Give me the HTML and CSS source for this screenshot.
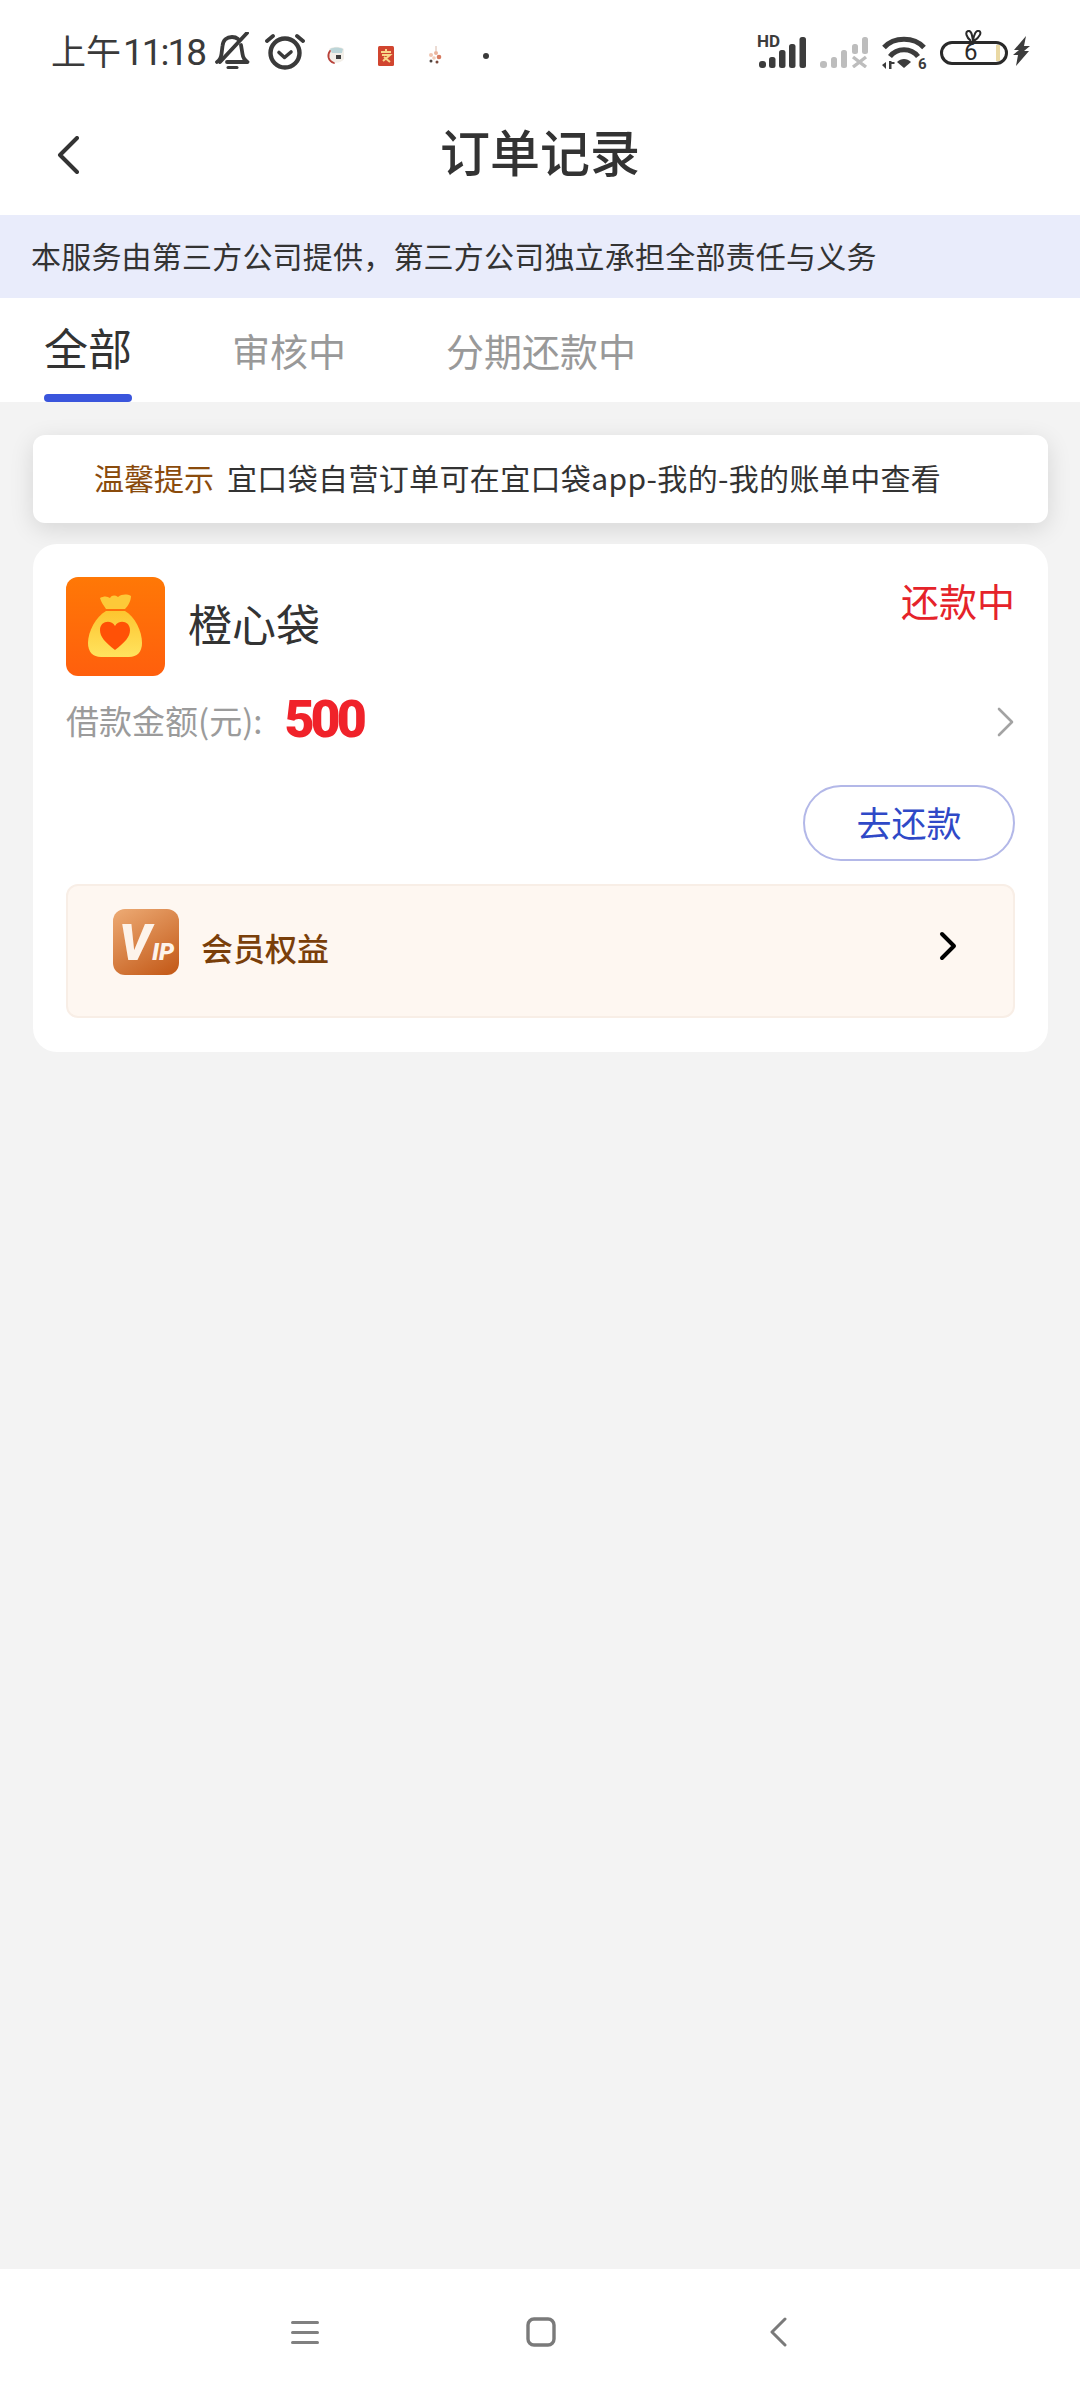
FILE: index.html
```html
<!DOCTYPE html>
<html lang="zh-CN">
<head>
    <meta charset="UTF-8">
    <meta name="viewport" content="width=device-width, initial-scale=1.0">
    <title>订单记录</title>
    <link rel="stylesheet" href="styles.css">
</head>
<body>
    <div class="status-bar">
        <div class="status-left">
            <span class="status-time"><span class="status-ampm">上午</span>11:18</span>
            <svg class="icon-bell" width="35" height="38" viewBox="0 0 35 38" fill="none" stroke="#3a3a3a" stroke-width="3.800" stroke-linecap="round" stroke-linejoin="round">
                <path d="M2 30c3-2 4-4 4.500-8l1-8C8 8 12 5 17 5c2.500 0 4.500 .7 6 2"/>
                <path d="M26 13l1.500 9c.5 4 2 6 5 8H12"/>
                <path d="M32 1L5 30"/>
                <path d="M13 35.500h9" stroke-width="3"/>
            </svg>
            <svg class="icon-alarm" width="40" height="39" viewBox="0 0 40 39" fill="none" stroke="#3a3a3a" stroke-linecap="round" stroke-linejoin="round">
                <circle cx="20" cy="21" r="14.500" stroke-width="4.400"/>
                <path d="M14 20.500l5.500 5 6.500-5.500" stroke-width="3.600"/>
                <path d="M2 9l6-5M38 9l-6-5" stroke-width="3.800"/>
            </svg>
            <svg class="icon-app-a" width="20" height="19" viewBox="0 0 20 19">
                <path d="M3 3c4-3 11-3 15 0v10c-2 4-10 5-14 2z" fill="#f3efe9"/>
                <path d="M4 3c4-2 9-2 13 0l-1 4H6z" fill="#bcd5d8"/>
                <path d="M4 5C1 9 2 15 8 17" fill="none" stroke="#b8423a" stroke-width="1.800" stroke-linecap="round"/>
                <rect x="10" y="9" width="5" height="4" fill="#3f3f3f"/>
            </svg>
            <svg class="icon-app-b" width="16" height="20" viewBox="0 0 16 20">
                <rect width="16" height="20" rx="1.500" fill="#d1452f"/>
                <path d="M3 6h10M8 3v3M4 9h8L5 15M6 11l6 5" fill="none" stroke="#f8d689" stroke-width="2"/>
            </svg>
            <svg class="icon-app-c" width="14" height="19" viewBox="0 0 14 19">
                <path d="M8 0v5" stroke="#d8b8a8" stroke-width="1"/>
                <circle cx="8" cy="7" r="2" fill="#eab49c"/>
                <circle cx="3" cy="9" r="2" fill="#efc4b0"/>
                <circle cx="11" cy="11" r="2.300" fill="#d77a5f"/>
                <circle cx="6" cy="12" r="1.800" fill="#f0cdb9"/>
                <circle cx="3" cy="15" r="1.500" fill="#4c4440"/>
                <circle cx="9" cy="16" r="1.500" fill="#7b4a3c"/>
            </svg>
            <span class="status-dot"></span>
        </div>
        <div class="status-right">
            <svg class="icon-signal" width="50" height="38" viewBox="0 -6 50 38" fill="#3c3c3c">
                <text class="icon-hd" x="0" y="11">HD</text>
                <rect x="2" y="25" width="7" height="7" rx="3"/>
                <rect x="12" y="21" width="6.500" height="11" rx="2.500"/>
                <rect x="22" y="14" width="6.500" height="18" rx="2.500"/>
                <rect x="32" y="8" width="6.500" height="24" rx="2.500"/>
                <rect x="42.500" y="1" width="6.500" height="31" rx="2.500"/>
            </svg>
            <svg class="icon-signal-off" width="48" height="32" viewBox="0 0 48 32" fill="#bdbdbd">
                <rect x="0" y="25" width="7" height="7" rx="3"/>
                <rect x="11" y="21" width="6" height="11" rx="2.500"/>
                <rect x="21" y="14" width="6" height="18" rx="2.500"/>
                <rect x="32" y="8" width="6" height="10" rx="2.500"/>
                <rect x="42" y="1" width="6" height="17" rx="2.500"/>
                <path d="M33 21l13 10M46 21L33 31" fill="none" stroke="#bdbdbd" stroke-width="3.400"/>
            </svg>
            <svg class="icon-wifi" width="46" height="42" viewBox="0 0 46 42" fill="none" stroke="#3c3c3c" stroke-width="5">
                <path d="M3 12.500C13 1.500 33 1.500 43 12.500"/>
                <path d="M9 21.500C16 12.500 30 12.500 37 21.500"/>
                <path d="M23 33l-7-6c4-4 10-4 14 0z" fill="#3c3c3c" stroke="none"/>
                <path d="M1 30l4-3v7zM8 26h2.500v8H8zM10.500 27h3v2h-3z" fill="#3c3c3c" stroke="none"/>
                <text class="icon-wifi-six" x="37" y="34">6</text>
            </svg>
            <svg class="icon-battery" width="68" height="37" viewBox="0 0 68 37" fill="none" stroke="#2a2a2a">
                <rect x="1.500" y="12.500" width="65" height="21" rx="10.500" stroke-width="3"/>
                <rect x="56" y="15" width="4" height="16" fill="#ead9a4" stroke="none"/>
                <path d="M31 11c-5-4-6-9-3-10s4 3 5 10c1-7 3-11 6-10s1 6-5 10" stroke-width="2"/>
                <text class="icon-battery-six" x="24" y="30">6</text>
            </svg>
            <svg class="icon-bolt" width="17" height="30" viewBox="0 0 17 30" fill="#3c3c3c">
                <path d="M13 0L1 14h5l-6 5h5L3 30l13-15h-5l6-5h-6z"/>
            </svg>
        </div>
    </div>

    <div class="nav-bar">
        <svg class="nav-back" width="22" height="38" viewBox="0 0 22 38" fill="none" stroke="#333" stroke-width="4" stroke-linecap="round" stroke-linejoin="round">
            <path d="M20 2L3 19l17 17"/>
        </svg>
        <h1 class="nav-title">订单记录</h1>
    </div>

    <div class="notice-banner">本服务由第三方公司提供，第三方公司独立承担全部责任与义务</div>

    <div class="tabs">
        <div class="tab tab-active">全部</div>
        <div class="tab">审核中</div>
        <div class="tab">分期还款中</div>
    </div>

    <div class="content">
        <div class="tip-card">
            <span class="tip-label">温馨提示</span>
            <span class="tip-text">宜口袋自营订单可在宜口袋app-我的-我的账单中查看</span>
        </div>

        <div class="order-card">
            <div class="order-head">
                <svg class="order-logo" width="99" height="99" viewBox="0 0 99 99">
                    <defs>
                        <linearGradient id="logoBg" x1="0" y1="0" x2="0" y2="1">
                            <stop offset="0" stop-color="#ff7806"/>
                            <stop offset="1" stop-color="#ff5f0d"/>
                        </linearGradient>
                        <linearGradient id="bagFill" x1="0" y1="0" x2="0" y2="1">
                            <stop offset="0" stop-color="#fdc52f"/>
                            <stop offset="1" stop-color="#ffe35e"/>
                        </linearGradient>
                    </defs>
                    <rect width="99" height="99" rx="12" fill="url(#logoBg)"/>
                    <path d="M34 21C38 19 41 19 44 21C46 18 49 18 52 20C56 17 61 17 65 19C65 24 62 29 59 32H40C38 29 35 25 34 21z" fill="#fdc938"/>
                    <path d="M40 34h19c10 6 17 20 17 32c0 9-5 14-13 14H35c-8 0-13-5-13-14c0-12 8-26 18-32z" fill="url(#bagFill)"/>
                    <path d="M49 73C39 65 34 60 34 53c0-9 11-11 15-4c4-7 15-5 15 4c0 7-5 12-15 20z" fill="#ff5106"/>
                </svg>
                <div class="order-name">橙心袋</div>
                <div class="order-status">还款中</div>
            </div>
            <div class="order-amount">
                <span class="amount-label">借款金额(元):</span>
                <span class="amount-value">500</span>
                <svg class="amount-arrow" width="18" height="30" viewBox="0 0 18 30" fill="none" stroke="#a3a3a3" stroke-width="2.600" stroke-linecap="round" stroke-linejoin="round">
                    <path d="M2 2l13 13L2 28"/>
                </svg>
            </div>
            <div class="order-actions">
                <div class="repay-btn">去还款</div>
            </div>
            <div class="vip-row">
                <svg class="vip-icon" width="66" height="66" viewBox="0 0 66 66">
                    <defs>
                        <linearGradient id="vipBg" x1="0.200" y1="0" x2="0.800" y2="1">
                            <stop offset="0" stop-color="#eaa56e"/>
                            <stop offset="1" stop-color="#c55d1c"/>
                        </linearGradient>
                    </defs>
                    <rect width="66" height="66" rx="12" fill="url(#vipBg)"/>
                    <text class="vip-v" x="6" y="51">V</text>
                    <text class="vip-ip" x="39" y="51">IP</text>
                </svg>
                <div class="vip-text">会员权益</div>
                <svg class="vip-arrow" width="18" height="30" viewBox="0 0 18 30" fill="none" stroke="#000" stroke-width="4" stroke-linecap="round" stroke-linejoin="round">
                    <path d="M3 3l12 12L3 27"/>
                </svg>
            </div>
        </div>
    </div>

    <div class="bottom-nav">
        <svg width="28" height="24" viewBox="0 0 28 24" fill="#808080">
            <rect y="1" width="28" height="3" rx="1.500"/>
            <rect y="11" width="28" height="3" rx="1.500"/>
            <rect y="21" width="28" height="3" rx="1.500"/>
        </svg>
        <svg class="nav-home" width="30" height="30" viewBox="0 0 30 30" fill="none" stroke="#7a7a7a" stroke-width="3.400">
            <rect x="2" y="2" width="26" height="26" rx="6"/>
        </svg>
        <svg width="18" height="30" viewBox="0 0 18 30" fill="none" stroke="#7a7a7a" stroke-width="3" stroke-linecap="round" stroke-linejoin="round">
            <path d="M16 2L3 15l13 13"/>
        </svg>
    </div>
</body>
</html>
```

FILE: styles.css
```css
* {
    box-sizing: border-box;
}
body {
    margin: 0;
    width: 1080px;
    height: 2400px;
    display: flex;
    flex-direction: column;
    background: #f3f3f3;
    color: #333;
    font-family: "Noto Sans CJK SC", "Noto Sans", sans-serif;
}

/* status bar */
.status-bar {
    height: 72px;
    flex: none;
    padding: 30px 50px 0 51px;
    display: flex;
    justify-content: space-between;
    align-items: flex-start;
    background: #fff;
}
.status-left {
    display: flex;
    align-items: center;
    height: 42px;
}
.status-time {
    font-family: Roboto, "Noto Sans CJK SC", sans-serif;
    font-size: 37px;
    line-height: 42px;
    letter-spacing: -2px;
    color: #3a3a3a;
    width: 164px;
    white-space: nowrap;
}
.status-ampm {
    font-family: "Noto Sans CJK SC", sans-serif;
    font-size: 35px;
    letter-spacing: 0;
    margin-right: 2px;
}
.icon-alarm {
    margin-left: 15px;
}
.icon-app-a {
    margin-left: 21px;
    margin-top: 9px;
}
.icon-app-b {
    margin-left: 32px;
    margin-top: 9px;
}
.icon-app-c {
    margin-left: 34px;
    margin-top: 9px;
}
.status-dot {
    width: 6px;
    height: 6px;
    margin-left: 41px;
    margin-top: 9px;
    border-radius: 50%;
    background: #3a3a3a;
}
.status-right {
    display: flex;
    align-items: flex-start;
}
.icon-signal-off {
    margin-top: 6px;
    margin-left: 13px;
}
.icon-wifi {
    margin-top: 5px;
    margin-left: 13px;
}
.icon-battery {
    margin-left: 13px;
}
.icon-bolt {
    margin-top: 6px;
    margin-left: 5px;
}
.icon-hd {
    font-family: Roboto, sans-serif;
    font-weight: 700;
    font-size: 17px;
}
.icon-wifi-six {
    font-family: Roboto, sans-serif;
    font-weight: 700;
    font-size: 15px;
    fill: #3c3c3c;
    stroke: none;
}
.icon-battery-six {
    font-family: Roboto, sans-serif;
    font-size: 24px;
    fill: #2a2a2a;
    stroke: none;
}

/* title bar */
.nav-bar {
    height: 143px;
    flex: none;
    position: relative;
    display: flex;
    align-items: center;
    justify-content: center;
    background: #fff;
}
.nav-back {
    position: absolute;
    left: 57px;
    top: 64px;
}
.nav-title {
    margin: 0;
    font-size: 50px;
    font-weight: 500;
    line-height: 60px;
    color: #333;
    padding-top: 12px;
}

.notice-banner {
    height: 83px;
    flex: none;
    padding: 0 0 3px 31px;
    display: flex;
    align-items: center;
    background: #e9ecfb;
    font-size: 30px;
    letter-spacing: 0.2px;
    color: #333;
}

/* tabs */
.tabs {
    height: 104px;
    flex: none;
    padding-left: 44px;
    display: flex;
    gap: 100px;
    background: #fff;
}
.tab {
    position: relative;
    font-size: 38px;
    line-height: 104px;
    color: #999;
}
.tab-active {
    font-size: 44px;
    line-height: 99px;
    color: #333;
}
.tab-active::after {
    content: "";
    position: absolute;
    left: 0;
    right: 0;
    bottom: 0;
    height: 8px;
    border-radius: 4px;
    background: #3a55dc;
}

/* content */
.content {
    flex: 1;
    padding: 33px 32px 0 33px;
    display: flex;
    flex-direction: column;
    gap: 21px;
}
.tip-card {
    height: 88px;
    padding: 0 0 4px 61px;
    display: flex;
    align-items: center;
    gap: 13px;
    background: #fff;
    border-radius: 12px;
    box-shadow: 0 6px 24px rgba(0, 0, 0, 0.12);
    font-size: 30px;
}
.tip-label {
    color: #8a4b0c;
}
.tip-text {
    letter-spacing: 0.35px;
    color: #333;
}
.order-card {
    height: 508px;
    padding: 33px 33px 0;
    background: #fff;
    border-radius: 24px;
}
.order-head {
    height: 99px;
    display: flex;
    align-items: flex-start;
}
.order-logo {
    flex: none;
}
.order-name {
    margin-left: 23px;
    font-size: 44px;
    line-height: 93px;
    color: #333;
}
.order-status {
    margin-left: auto;
    font-size: 38px;
    line-height: 46px;
    color: #e5232a;
}
.order-amount {
    height: 70px;
    margin-top: 9px;
    display: flex;
    align-items: center;
}
.amount-label {
    font-size: 33px;
    color: #9b9b9b;
}
.amount-value {
    margin-left: 22px;
    font-family: Roboto, sans-serif;
    font-weight: 900;
    font-size: 52px;
    line-height: 70px;
    letter-spacing: -4px;
    color: #f0222a;
}
.amount-arrow {
    margin-left: auto;
    margin-top: 4px;
}
.order-actions {
    margin-top: 30px;
    display: flex;
    justify-content: flex-end;
}
.repay-btn {
    width: 212px;
    height: 76px;
    padding-bottom: 3px;
    display: flex;
    align-items: center;
    justify-content: center;
    border: 2px solid #b3b8e8;
    border-radius: 38px;
    font-size: 35px;
    color: #2f49c7;
}
.vip-row {
    height: 134px;
    margin-top: 23px;
    padding: 23px 56px 0 45px;
    display: flex;
    align-items: flex-start;
    background: #fef7f1;
    border: 2px solid #f8eee6;
    border-radius: 12px;
}
.vip-icon {
    flex: none;
}
.vip-text {
    margin-left: 22px;
    font-size: 32px;
    font-weight: 500;
    line-height: 76px;
    color: #7a3f0a;
}
.vip-arrow {
    margin-left: auto;
    margin-top: 22px;
}
.vip-v {
    font-family: Roboto, sans-serif;
    font-weight: 900;
    font-style: italic;
    font-size: 50px;
    fill: #fdf3ea;
}
.vip-ip {
    font-family: Roboto, sans-serif;
    font-weight: 900;
    font-style: italic;
    font-size: 24px;
    fill: #fdf3ea;
}

/* system nav */
.bottom-nav {
    height: 131px;
    flex: none;
    padding: 0 293px 5px 291px;
    display: flex;
    align-items: center;
    justify-content: space-between;
    background: #fff;
}
.nav-home {
    margin-left: -6px;
}
```
